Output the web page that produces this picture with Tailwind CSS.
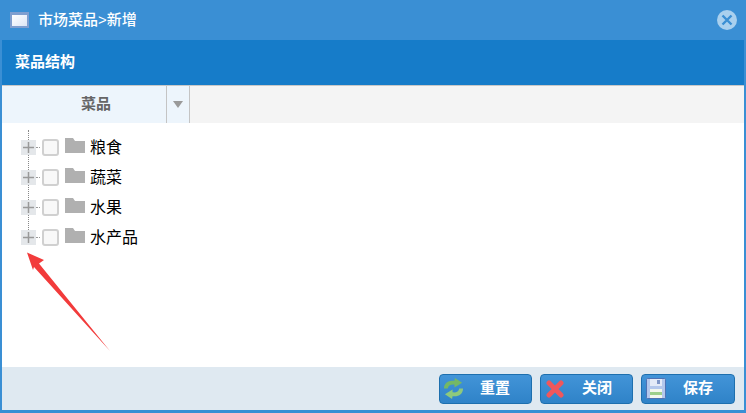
<!DOCTYPE html>
<html lang="zh">
<head>
    <meta charset="UTF-8">
    <title>市场菜品&gt;新增</title>
    <script src="https://cdn.jsdelivr.net/npm/@tailwindcss/browser@4"></script>
</head>
<body class="w-[746px] h-[413px] overflow-hidden bg-[#3a8fd4] font-['Liberation_Sans','Noto_Sans_CJK_SC',sans-serif]">
    <div class="relative flex flex-col h-[413px]">
        <!-- title bar -->
        <div class="flex items-center h-[40px] shrink-0 pl-[10px] pr-[9px]">
            <div class="w-[19px] h-[16px] bg-gradient-to-br from-white to-[#dde6f5] border-2 border-[#7f9fd0] border-t-[3px]"></div>
            <span class="ml-[9px] text-[15px] font-medium text-white">市场菜品&gt;新增</span>
            <svg class="ml-auto" width="20" height="20" viewBox="0 0 20 20">
                <circle cx="10" cy="10" r="10" fill="#a9d0ee"/>
                <path d="M5.500 5.500 14.500 14.500M14.500 5.500 5.500 14.500" stroke="#3a8fd4" stroke-width="2.400"/>
            </svg>
        </div>

        <div class="flex flex-col flex-1 mx-[2px] mb-[3px] bg-white">
            <div class="flex items-center h-[45px] shrink-0 bg-[#167cc9] pl-[13px] text-[15px] font-bold text-white">菜品结构</div>

            <!-- tab strip -->
            <div class="flex h-[38px] shrink-0 bg-[#f4f4f4] border-t border-[#c8c8c8]">
                <div class="flex items-center justify-center w-[165px] pl-[24px] bg-[#edf5fc] border-r border-[#c4c4c4] text-[15px] font-bold text-[#666]">菜品</div>
                <div class="flex items-center justify-center w-[23px] bg-[#edf5fc] border-r border-[#c4c4c4]">
                    <svg width="10" height="7" viewBox="0 0 10 7"><path d="M0 0H10L5 7Z" fill="#9a9a9a"/></svg>
                </div>
            </div>

            <!-- tree -->
            <div class="relative flex-1 pt-[9px] pl-[19px]">
                <div class="absolute left-[26px] top-[7px] h-[106px] border-l border-dotted border-[#888]"></div>
                <div class="flex items-center h-[30px]">
                    <div class="relative flex items-center justify-center w-[15px] h-[15px] bg-[#e4e7ea]">
                        <svg width="11" height="11" viewBox="0 0 11 11"><path d="M0 5.500H11M5.500 0V11" stroke="#999" stroke-width="1.500"/></svg>
                        <span class="absolute left-[15px] top-[7px] w-[4px] border-t border-dotted border-[#999]"></span>
                    </div>
                    <div class="ml-[6px] w-[17px] h-[17px] rounded-[3px] bg-[#f8f8f8] border-2 border-[#d0d0d0]"></div>
                    <svg class="ml-[6px] -mt-[3px]" width="20" height="15" viewBox="0 0 20 15"><path d="M0 0H8L10 3H20V15H0Z" fill="#b0b0b0"/></svg>
                    <span class="ml-[5px] mt-[2px] text-[16px] text-black">粮食</span>
                </div>
                <div class="flex items-center h-[30px]">
                    <div class="relative flex items-center justify-center w-[15px] h-[15px] bg-[#e4e7ea]">
                        <svg width="11" height="11" viewBox="0 0 11 11"><path d="M0 5.500H11M5.500 0V11" stroke="#999" stroke-width="1.500"/></svg>
                        <span class="absolute left-[15px] top-[7px] w-[4px] border-t border-dotted border-[#999]"></span>
                    </div>
                    <div class="ml-[6px] w-[17px] h-[17px] rounded-[3px] bg-[#f8f8f8] border-2 border-[#d0d0d0]"></div>
                    <svg class="ml-[6px] -mt-[3px]" width="20" height="15" viewBox="0 0 20 15"><path d="M0 0H8L10 3H20V15H0Z" fill="#b0b0b0"/></svg>
                    <span class="ml-[5px] mt-[2px] text-[16px] text-black">蔬菜</span>
                </div>
                <div class="flex items-center h-[30px]">
                    <div class="relative flex items-center justify-center w-[15px] h-[15px] bg-[#e4e7ea]">
                        <svg width="11" height="11" viewBox="0 0 11 11"><path d="M0 5.500H11M5.500 0V11" stroke="#999" stroke-width="1.500"/></svg>
                        <span class="absolute left-[15px] top-[7px] w-[4px] border-t border-dotted border-[#999]"></span>
                    </div>
                    <div class="ml-[6px] w-[17px] h-[17px] rounded-[3px] bg-[#f8f8f8] border-2 border-[#d0d0d0]"></div>
                    <svg class="ml-[6px] -mt-[3px]" width="20" height="15" viewBox="0 0 20 15"><path d="M0 0H8L10 3H20V15H0Z" fill="#b0b0b0"/></svg>
                    <span class="ml-[5px] mt-[2px] text-[16px] text-black">水果</span>
                </div>
                <div class="flex items-center h-[30px]">
                    <div class="relative flex items-center justify-center w-[15px] h-[15px] bg-[#e4e7ea]">
                        <svg width="11" height="11" viewBox="0 0 11 11"><path d="M0 5.500H11M5.500 0V11" stroke="#999" stroke-width="1.500"/></svg>
                        <span class="absolute left-[15px] top-[7px] w-[4px] border-t border-dotted border-[#999]"></span>
                    </div>
                    <div class="ml-[6px] w-[17px] h-[17px] rounded-[3px] bg-[#f8f8f8] border-2 border-[#d0d0d0]"></div>
                    <svg class="ml-[6px] -mt-[3px]" width="20" height="15" viewBox="0 0 20 15"><path d="M0 0H8L10 3H20V15H0Z" fill="#b0b0b0"/></svg>
                    <span class="ml-[5px] mt-[2px] text-[16px] text-black">水产品</span>
                </div>
            </div>

            <!-- footer buttons -->
            <div class="flex justify-end items-center gap-[8px] h-[43px] shrink-0 bg-[#dfe9f1] pr-[9px]">
                <button class="flex items-center w-[93px] h-[30px] pl-[3px] rounded-[4px] border border-[#1d6fae] bg-gradient-to-b from-[#4294d8] to-[#2f83c8] text-[15px] font-bold text-white">
                    <svg width="21" height="21" viewBox="0 0 22 22">
                        <path d="M1 11C1 5 6 2 12 3L12.500 0 20 5 12 10 12 7C8 6.500 5.500 8 5 11Z" fill="#74b866"/>
                        <path d="M21 11C21 17 16 20 10 19L9.500 22 2 17 10 12 10 15C14 15.500 16.500 14 17 11Z" fill="#8ec97c"/>
                    </svg>
                    <span class="ml-[16px]">重置</span>
                </button>
                <button class="flex items-center w-[93px] h-[30px] pl-[5px] rounded-[4px] border border-[#1d6fae] bg-gradient-to-b from-[#4294d8] to-[#2f83c8] text-[15px] font-bold text-white">
                    <svg width="18" height="18" viewBox="0 0 18 18">
                        <path d="M3 3 15 15M15 3 3 15" stroke="#f0575c" stroke-width="5" stroke-linecap="round"/>
                    </svg>
                    <span class="ml-[18px]">关闭</span>
                </button>
                <button class="flex items-center w-[94px] h-[30px] pl-[4px] rounded-[4px] border border-[#1d6fae] bg-gradient-to-b from-[#4294d8] to-[#2f83c8] text-[15px] font-bold text-white">
                    <svg width="20" height="21" viewBox="0 0 20 21">
                        <rect x="0.500" y="0.500" width="19" height="20" rx="1" fill="#b4c8ec" stroke="#4f72b4"/>
                        <rect x="4" y="1" width="12" height="7" fill="#e4ebf8"/>
                        <rect x="11" y="2" width="3" height="4" fill="#7f97c8"/>
                        <rect x="4" y="11" width="12" height="9" fill="#f2f7ee"/>
                        <rect x="4" y="14" width="12" height="3" fill="#9ccf8c"/>
                    </svg>
                    <span class="ml-[17px]">保存</span>
                </button>
            </div>
        </div>

        <!-- annotation arrow over the screenshot -->
        <svg class="absolute left-0 top-0 pointer-events-none" width="746" height="413" viewBox="0 0 746 413">
            <polygon points="27,252.500 44,260 39,263.500 110,351 34,267 33,270" fill="#f23b3b"/>
        </svg>
    </div>
</body>
</html>
